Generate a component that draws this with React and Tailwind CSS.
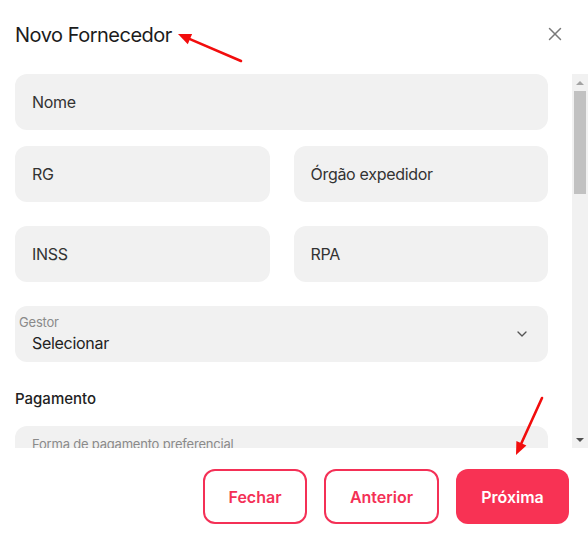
import { ChevronDown, X } from "lucide-react";

function Field({ label, className = "" }) {
  return (
    <div className={`h-14 rounded-xl bg-[#f1f1f1] flex items-center pl-[17px] ${className}`}>
      <span className="text-[16px] text-[#333] tracking-[-0.3px]">{label}</span>
    </div>
  );
}

// red annotation arrow, tip at (x2, y2)
function Arrow({ x1, y1, x2, y2 }) {
  const a = Math.atan2(y2 - y1, x2 - x1);
  const len = 13;
  const w = 5.5;
  const bx = x2 - len * Math.cos(a);
  const by = y2 - len * Math.sin(a);
  const px = -Math.sin(a) * w;
  const py = Math.cos(a) * w;
  return (
    <g>
      <line x1={x1} y1={y1} x2={bx} y2={by} stroke="#f20d0d" strokeWidth="2.6" strokeLinecap="round" />
      <polygon points={`${x2},${y2} ${bx + px},${by + py} ${bx - px},${by - py}`} fill="#f20d0d" />
    </g>
  );
}

export default function App() {
  return (
    <div className="relative w-[588px] h-[541px] bg-white flex flex-col font-['Inter',sans-serif] overflow-hidden">
      {/* Header */}
      <div className="h-[74px] flex items-start justify-between pl-[15px] pr-[22px] pt-[22px] shrink-0">
        <h1 className="text-[20px] leading-[26px] text-[#1c1c1c] tracking-[-0.5px]">Novo Fornecedor</h1>
        <X className="w-[22px] h-[22px] text-[#7a7a7a] mt-[1px]" strokeWidth={1.6} />
      </div>

      {/* Body */}
      <div className="h-[374px] flex shrink-0">
        <div className="flex-1 overflow-hidden pl-[15px] pr-[24px]">
          <Field label="Nome" />
          <div className="grid grid-cols-2 gap-x-6 gap-y-6 mt-4">
            <Field label="RG" />
            <Field label="Órgão expedidor" />
            <Field label="INSS" />
            <Field label="RPA" />
          </div>
          <div className="h-14 mt-6 rounded-xl bg-[#f1f1f1] flex items-center justify-between pl-1 pr-[18px]">
            <div className="flex flex-col">
              <span className="text-[13px] leading-[15px] text-[#8a8a8a] tracking-[-0.2px]">Gestor</span>
              <span className="text-[16px] leading-[22px] text-[#222] pl-[13px] mt-[2px] tracking-[-0.3px]">Selecionar</span>
            </div>
            <ChevronDown className="w-[16px] h-[16px] text-[#555]" strokeWidth={2} />
          </div>
          <h2 className="mt-[28px] text-[15px] leading-[18px] font-medium text-[#222]">Pagamento</h2>
          <div className="mt-[18px] h-14 rounded-xl bg-[#f1f1f1] pl-[17px] pt-[11px]">
            <span className="block text-[13px] leading-[15px] text-[#8a8a8a] tracking-[-0.2px]">Forma de pagamento preferencial</span>
          </div>
        </div>
        {/* Scrollbar */}
        <div className="w-4 bg-[#f1f1f1] flex flex-col items-center">
          <div className="h-[17px] flex items-center justify-center">
            <div className="w-0 h-0 border-l-[4px] border-r-[4px] border-b-[4px] border-l-transparent border-r-transparent border-b-[#a3a3a3]" />
          </div>
          <div className="w-[12px] h-[103px] bg-[#c1c1c1]" />
          <div className="flex-1" />
          <div className="h-[17px] flex items-center justify-center">
            <div className="w-0 h-0 border-l-[4px] border-r-[4px] border-t-[4px] border-l-transparent border-r-transparent border-t-[#505050]" />
          </div>
        </div>
      </div>

      {/* Footer */}
      <div className="flex-1 flex justify-end items-start pt-[21px] pr-[19px] gap-[17px]">
        <button className="w-[104px] h-[55px] rounded-xl border-2 border-[#f43056] text-[#f43056] text-[16px] font-semibold">
          Fechar
        </button>
        <button className="w-[115px] h-[55px] rounded-xl border-2 border-[#f43056] text-[#f43056] text-[16px] font-semibold">
          Anterior
        </button>
        <button className="w-[113px] h-[55px] rounded-xl bg-[#f83254] text-white text-[16px] font-semibold">
          Próxima
        </button>
      </div>

      {/* annotation arrows */}
      <svg className="absolute inset-0 pointer-events-none" width="588" height="541">
        <Arrow x1={241} y1={61} x2={178} y2={34} />
        <Arrow x1={542} y1={398} x2={516} y2={455} />
      </svg>
    </div>
  );
}
